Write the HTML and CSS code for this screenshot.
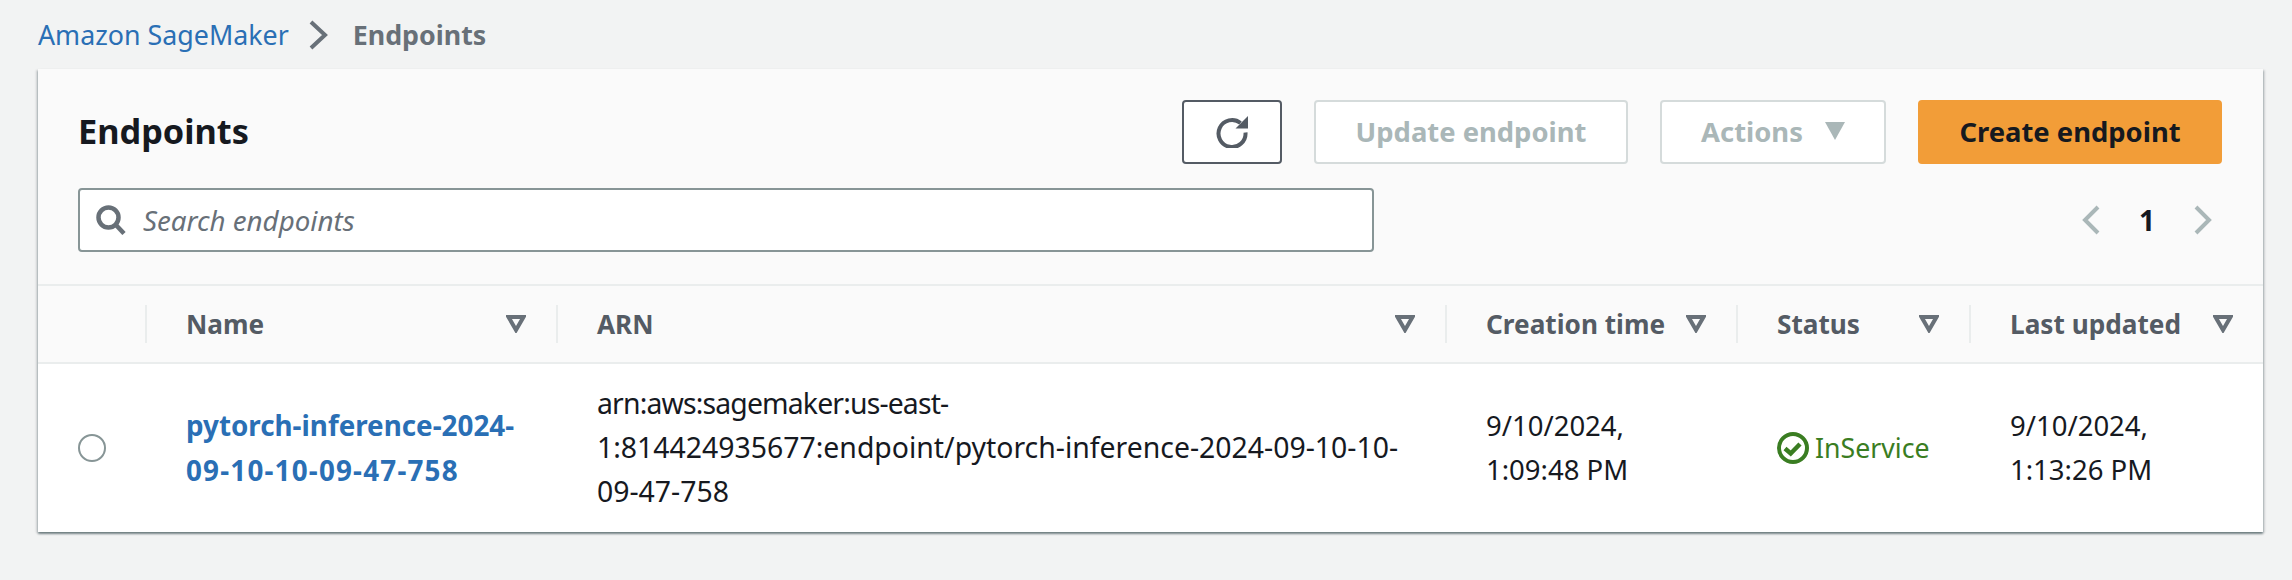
FILE: index.html
```html
<!DOCTYPE html>
<html lang="en">
<head>
    <meta charset="UTF-8">
    <meta name="viewport" content="width=device-width, initial-scale=1.0">
    <title>Endpoints</title>
    <link rel="stylesheet" href="styles.css">
</head>
<body>
    <nav class="breadcrumb">
        <a href="#">Amazon SageMaker</a>
        <svg class="crumb-sep" viewBox="0 0 20 30"><path d="M3 2 L17 15 L3 28" /></svg>
        <span class="crumb-current">Endpoints</span>
    </nav>

    <section class="panel">
        <header class="panel-header">
            <div class="top-row">
                <h1>Endpoints</h1>
                <div class="actions">
                    <button class="btn btn-refresh" aria-label="Refresh">
                        <svg class="icon-refresh" viewBox="0 0 32 32"><path d="M24.5 7 A13.5 13.5 0 1 0 29.5 16.5" /><path class="fill" d="M19.5 12.5 H32 V0 Z" /></svg>
                    </button>
                    <button class="btn btn-update" disabled>Update endpoint</button>
                    <button class="btn btn-actions" disabled>Actions <svg class="caret" viewBox="0 0 20 18"><path d="M0 0 H20 L10 18 Z" /></svg></button>
                    <button class="btn btn-primary">Create endpoint</button>
                </div>
            </div>
            <div class="filter-row">
                <label class="search">
                    <svg class="icon-search" viewBox="0 0 30 30"><circle cx="12.5" cy="12.5" r="10" /><path d="M19.5 19.5 L28 28.5" /></svg>
                    <input type="text" placeholder="Search endpoints">
                </label>
                <div class="pager">
                    <svg class="pager-arrow" viewBox="0 0 18 30"><path d="M16 2 L3 15 L16 28" /></svg>
                    <span class="page-num">1</span>
                    <svg class="pager-arrow" viewBox="0 0 18 30"><path d="M2 2 L15 15 L2 28" /></svg>
                </div>
            </div>
        </header>

        <div class="table-head table-grid">
            <div class="th th-select"></div>
            <div class="th">Name <svg class="sort" viewBox="0 0 20 18"><path d="M2.5 2 H17.5 L10 15 Z" /></svg></div>
            <div class="th">ARN <svg class="sort" viewBox="0 0 20 18"><path d="M2.5 2 H17.5 L10 15 Z" /></svg></div>
            <div class="th">Creation time <svg class="sort" viewBox="0 0 20 18"><path d="M2.5 2 H17.5 L10 15 Z" /></svg></div>
            <div class="th">Status <svg class="sort" viewBox="0 0 20 18"><path d="M2.5 2 H17.5 L10 15 Z" /></svg></div>
            <div class="th">Last updated <svg class="sort" viewBox="0 0 20 18"><path d="M2.5 2 H17.5 L10 15 Z" /></svg></div>
        </div>

        <div class="table-row table-grid">
            <div class="td td-select"><span class="radio"></span></div>
            <div class="td"><a class="name-link" href="#">pytorch-inference-2024-<br><span class="name-tail">09-10-10-09-47-758</span></a></div>
            <div class="td td-arn"><span class="arn-head">arn:aws:sagemaker:us-east-</span><br>1:814424935677:endpoint/pytorch-inference-2024-09-10-10-<br>09-47-758</div>
            <div class="td">9/10/2024,<br>1:09:48 PM</div>
            <div class="td status">
                <svg class="icon-ok" viewBox="0 0 32 32"><circle cx="16" cy="16" r="14" /><path d="M8 16.5 L13.7 21.5 L23 12" /></svg>
                InService
            </div>
            <div class="td">9/10/2024,<br>1:13:26 PM</div>
        </div>
    </section>
</body>
</html>
```

FILE: styles.css
```css
body {
    font-family: "Noto Sans", Arial, sans-serif;
    font-size: 26.2px;
    margin: 0;
    padding: 0;
    height: 580px;
    overflow: hidden;
    background-color: #f2f3f3;
    color: #16191f;
}
.breadcrumb {
    height: 69px;
    padding-left: 38px;
    display: flex;
    align-items: center;
    font-size: 26.8px;
}
.breadcrumb a {
    color: #2a6fb5;
    text-decoration: none;
}
.crumb-sep {
    width: 20px;
    height: 30px;
    margin: 0 25px 0 19px;
    fill: none;
    stroke: #687078;
    stroke-width: 4;
}
.crumb-current {
    color: #687078;
    font-weight: 700;
}
.panel {
    margin: 0 29px 0 38px;
    background: #fff;
    box-shadow: 0 2px 2px 0 rgba(0, 28, 36, 0.45), 2px 1px 2px 0 rgba(0, 28, 36, 0.12), -2px 1px 2px 0 rgba(0, 28, 36, 0.12);
}
.panel-header {
    background: #fafafa;
    padding: 31px 41px 32px 40px;
    border-bottom: 2px solid #eaeded;
}
.top-row, .filter-row {
    display: flex;
    justify-content: space-between;
    align-items: center;
}
.filter-row {
    margin-top: 24px;
}
h1 {
    margin: 0 0 3px;
    font-size: 34.3px;
    font-weight: 700;
}
.actions {
    display: flex;
    gap: 32px;
}
.btn {
    height: 64px;
    box-sizing: border-box;
    border: 2px solid #545b64;
    border-radius: 4px;
    background: #fff;
    font-family: inherit;
    font-size: 27.4px;
    font-weight: 700;
    padding: 0 0 2px;
    display: flex;
    align-items: center;
    justify-content: center;
}
.btn:disabled {
    border-color: #d5dbdb;
    color: #aab7b8;
}
.btn-refresh { width: 100px; padding: 0; }
.btn-update { width: 314px; }
.btn-actions { width: 226px; gap: 22px; }
.btn-primary {
    width: 304px;
    background: #f29d38;
    border-color: #f29d38;
    color: #16191f;
}
.icon-refresh {
    width: 32px;
    height: 32px;
    fill: none;
    stroke: #545b64;
    stroke-width: 4;
}
.icon-refresh .fill {
    fill: #545b64;
    stroke: none;
}
.caret {
    width: 20px;
    height: 18px;
    fill: #aab7b8;
}
.search {
    width: 1296px;
    height: 64px;
    box-sizing: border-box;
    border: 2px solid #879596;
    border-radius: 4px;
    background: #fff;
    display: flex;
    align-items: center;
    padding-left: 16px;
    gap: 17px;
}
.icon-search {
    width: 30px;
    height: 30px;
    fill: none;
    stroke: #687078;
    stroke-width: 4.5;
}
.search input {
    flex: 1;
    border: 0;
    outline: 0;
    background: transparent;
    font-family: inherit;
    font-size: 27.7px;
    font-style: italic;
    padding: 0;
}
.search input::placeholder {
    color: #687078;
    opacity: 1;
}
.pager {
    display: flex;
    align-items: center;
    gap: 39px;
    margin-right: 10px;
}
.pager-arrow {
    width: 18px;
    height: 30px;
    fill: none;
    stroke: #aab7b8;
    stroke-width: 4;
}
.page-num {
    font-size: 28px;
    font-weight: 700;
}
.table-grid {
    display: grid;
    grid-template-columns: 107px 411px 889px 291px 233px 294px;
}
.table-head {
    background: #fafafa;
    height: 76px;
    border-bottom: 2px solid #eaeded;
    align-items: center;
}
.th {
    height: 38px;
    box-sizing: border-box;
    padding: 0 30px 0 39px;
    display: flex;
    align-items: center;
    justify-content: space-between;
    color: #545b64;
    font-weight: 700;
    border-left: 2px solid #eaeded;
}
.th-select {
    border-left: 0;
}
.sort {
    width: 20px;
    height: 18px;
    flex-shrink: 0;
    fill: none;
    stroke: #687078;
    stroke-width: 4;
}
.table-row {
    height: 168px;
    align-items: center;
    line-height: 44px;
    font-size: 27.5px;
}
.td {
    padding-left: 41px;
}
.td-arn {
    font-size: 28.4px;
    padding-bottom: 2px;
}
.arn-head {
    letter-spacing: -0.85px;
}
.td-select {
    padding-left: 40px;
    display: flex;
    align-items: center;
}
.radio {
    width: 28px;
    height: 28px;
    box-sizing: border-box;
    border: 2px solid #879596;
    border-radius: 50%;
}
.name-link {
    color: #2a6fb5;
    font-size: 27.8px;
    font-weight: 700;
    text-decoration: none;
}
.name-tail {
    letter-spacing: 1.2px;
}
.status {
    display: flex;
    align-items: center;
    gap: 6px;
    color: #3a7d22;
    font-size: 26.7px;
}
.icon-ok {
    width: 32px;
    height: 32px;
    fill: none;
    stroke: #3a7d22;
    stroke-width: 4;
}
.icon-ok path {
    stroke-width: 4.5;
}
```
